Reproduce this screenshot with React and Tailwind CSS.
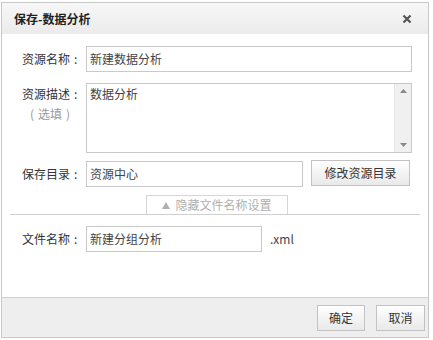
import React from 'react';

const font = { fontFamily: '"Noto Sans CJK SC", "Liberation Sans", sans-serif' };

function Label({ children }) {
  return (
    <div className="w-[64px] shrink-0 text-[#333] text-[12px] leading-[26px]">
      {children}
      <span className="ml-[4px]">:</span>
    </div>
  );
}

function Field({ value, width }) {
  return (
    <div className={`h-[26px] border border-[#c9c9c9] bg-white px-[3px] text-[12px] leading-[24px] text-[#444] ${width}`}>
      {value}
    </div>
  );
}

function Btn({ children, className = '' }) {
  return (
    <button className={`h-[26px] border border-[#c2c2c2] bg-gradient-to-b from-white to-[#e9e9e9] text-[12px] text-[#333] ${className}`}>
      {children}
    </button>
  );
}

export default function App() {
  return (
    <div className="w-[433px] h-[340px] bg-white pt-[2px] pl-[1px]" style={font}>
      <div className="w-[428px] h-[336px] border border-[#c8c8c8] flex flex-col">
        {/* header */}
        <div className="h-[31px] shrink-0 bg-gradient-to-b from-[#f7f7f7] to-[#ebebeb] flex items-center justify-between pl-[12px] pr-[16px]">
          <span className="text-[12px] font-bold text-[#222]">保存-数据分析</span>
          <svg width="10" height="10" viewBox="0 0 10 10">
            <path d="M1.5 1.5 L8.5 8.5 M8.5 1.5 L1.5 8.5" stroke="#555" strokeWidth="2.2" />
          </svg>
        </div>

        {/* body */}
        <div className="flex-1 flex flex-col pt-[12px]">
          <div className="flex pl-[20px]">
            <Label>资源名称</Label>
            <Field value="新建数据分析" width="w-[326px]" />
          </div>

          <div className="flex pl-[20px] mt-[11px]">
            <div className="w-[64px] shrink-0 text-[12px] text-[#333]">
              <div className="leading-[20px] mt-[1px]">
                资源描述<span className="ml-[4px]">:</span>
              </div>
              <div className="leading-[20px] text-[#999] flex gap-[4px] pl-[8px]">
                <span>(</span>
                <span>选填</span>
                <span>)</span>
              </div>
            </div>
            <div className="w-[326px] h-[70px] border border-[#c9c9c9] bg-white flex">
              <div className="flex-1 px-[3px] pt-[1px] text-[12px] leading-[18px] text-[#444]">数据分析</div>
              <div className="w-[17px] bg-[#f0f0f0] border-l border-[#e4e4e4] flex flex-col items-center justify-between py-[5px]">
                <svg width="7" height="4" viewBox="0 0 7 4"><path d="M0 4 L3.5 0 L7 4 Z" fill="#888" /></svg>
                <svg width="7" height="4" viewBox="0 0 7 4"><path d="M0 0 L3.5 4 L7 0 Z" fill="#888" /></svg>
              </div>
            </div>
          </div>

          <div className="flex items-center pl-[20px] mt-[8px]">
            <Label>保存目录</Label>
            <Field value="资源中心" width="w-[217px]" />
            <Btn className="ml-[8px] w-[99px] -mt-[2px]">修改资源目录</Btn>
          </div>

          <div className="mx-[8px] mt-[8px] border-b border-[#cfcfcf] flex justify-center">
            <div className="w-[142px] h-[19px] border border-b-0 border-[#d6d6d6] text-[12px] leading-[18px] text-[#b0b0b0] flex items-center justify-center gap-[5px] ml-[4px]">
              <svg width="8" height="7" viewBox="0 0 8 7"><path d="M0 7 L4 0 L8 7 Z" fill="#b0b0b0" /></svg>
              <span>隐藏文件名称设置</span>
            </div>
          </div>

          <div className="flex items-center pl-[20px] mt-[11px]">
            <Label>文件名称</Label>
            <Field value="新建分组分析" width="w-[176px]" />
            <span className="ml-[8px] text-[12px] text-[#444]">.xml</span>
          </div>
        </div>

        {/* footer */}
        <div className="h-[40px] shrink-0 border-t border-[#d2d2d2] bg-[#eeeeee] flex items-center justify-end gap-[11px] pr-[3px]">
          <Btn className="w-[48px]">确定</Btn>
          <Btn className="w-[49px]">取消</Btn>
        </div>
      </div>
    </div>
  );
}
